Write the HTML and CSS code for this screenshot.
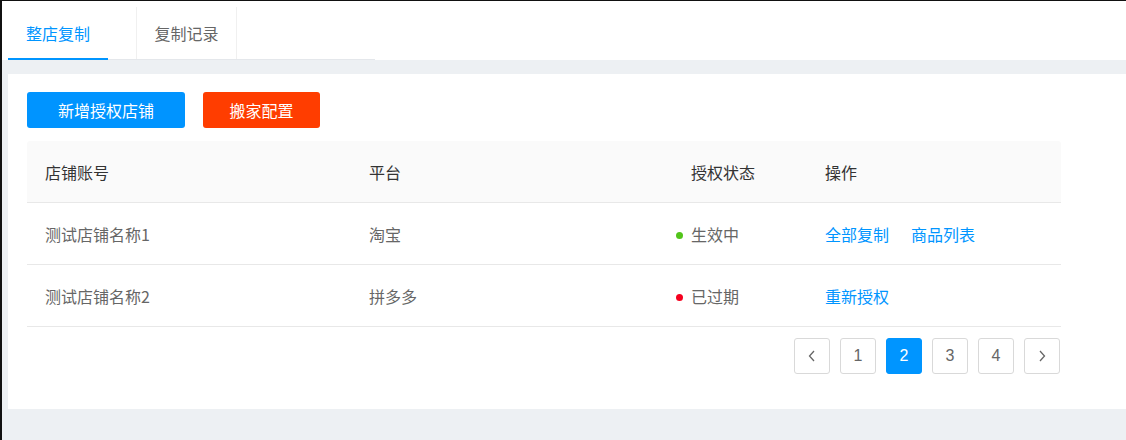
FILE: index.html
```html
<!DOCTYPE html>
<html lang="zh-CN">
<head>
<meta charset="utf-8">
<title>整店复制</title>
<link rel="stylesheet" href="styles.css">
</head>
<body>
<div class="header">
  <div class="tabs">
    <div class="tab active">整店复制</div>
    <div class="tab">复制记录</div>
  </div>
</div>
<div class="card">
  <div class="actions">
    <button class="btn btn-blue">新增授权店铺</button>
    <button class="btn btn-orange">搬家配置</button>
  </div>
  <div class="table">
    <div class="row head">
      <div class="cell">店铺账号</div>
      <div class="cell">平台</div>
      <div class="cell">授权状态</div>
      <div class="cell">操作</div>
    </div>
    <div class="row">
      <div class="cell">测试店铺名称1</div>
      <div class="cell">淘宝</div>
      <div class="cell"><span class="dot green"></span>生效中</div>
      <div class="cell ops"><a class="link">全部复制</a><a class="link">商品列表</a></div>
    </div>
    <div class="row">
      <div class="cell">测试店铺名称2</div>
      <div class="cell">拼多多</div>
      <div class="cell"><span class="dot red"></span>已过期</div>
      <div class="cell ops"><a class="link">重新授权</a></div>
    </div>
  </div>
  <div class="pager">
    <span class="page arrow"><svg width="10" height="14" viewBox="0 0 10 14"><path d="M7 2 L2.5 7 L7 12" fill="none" stroke="#666" stroke-width="1.3"/></svg></span>
    <span class="page">1</span>
    <span class="page current">2</span>
    <span class="page">3</span>
    <span class="page">4</span>
    <span class="page arrow"><svg width="10" height="14" viewBox="0 0 10 14"><path d="M3 2 L7.5 7 L3 12" fill="none" stroke="#666" stroke-width="1.3"/></svg></span>
  </div>
</div>
</body>
</html>
```
FILE: styles.css
```css
* { box-sizing: border-box; }
html, body { margin: 0; padding: 0; }
body {
  height: 440px;
  overflow: hidden;
  background: #edf0f3;
  border-top: 1px solid #111;
  border-left: 2px solid #111;
  font-family: "Noto Sans CJK SC", "Noto Sans", sans-serif;
  font-size: 16px;
  color: #666;
}
.header {
  background: #fff;
  height: 59px;
  padding-left: 6px;
}
.tabs {
  display: flex;
  align-items: flex-start;
  width: 367px;
  height: 59px;
  border-bottom: 1px solid #e4e7eb;
  gap: 28px;
}
.tab {
  width: 101px;
  height: 52px;
  margin-top: 6px;
  padding-top: 15px;
  line-height: 22px;
  text-align: center;
  color: #666;
  border-left: 1px solid #f0f0f0;
  border-right: 1px solid #f0f0f0;
}
.tab.active {
  width: 100px;
  height: 59px;
  margin-top: 0;
  padding-top: 21px;
  color: #0095ff;
  border: none;
  box-shadow: inset 0 -2px 0 #0095ff;
}
.card {
  background: #fff;
  margin: 14px 0 0 6px;
  padding: 18px 0 35px 19px;
}
.actions {
  display: flex;
  gap: 18px;
}
.btn {
  height: 36px;
  border: none;
  border-radius: 3px;
  color: #fff;
  font-family: inherit;
  font-size: 16px;
  padding: 0;
}
.btn-blue { width: 158px; background: #0094ff; }
.btn-orange { width: 117px; background: #ff3d00; }
.table {
  width: 1034px;
  margin-top: 13px;
}
.row {
  display: grid;
  grid-template-columns: 324px 322px 134px 1fr;
  height: 62px;
  border-bottom: 1px solid #e8e8e8;
  align-items: center;
}
.row.head {
  background: #fafafa;
  color: #333;
  border-radius: 3px 3px 0 0;
}
.cell {
  padding-left: 18px;
  line-height: 22px;
  white-space: nowrap;
}
.dot {
  display: inline-block;
  width: 7px;
  height: 7px;
  border-radius: 50%;
  margin-left: -15px;
  margin-right: 8px;
  vertical-align: middle;
  position: relative;
  top: -1px;
}
.dot.green { background: #52c41a; }
.dot.red { background: #f5001e; }
.ops {
  display: flex;
  gap: 22px;
}
.link { color: #0095ff; cursor: pointer; }
.pager {
  width: 1033px;
  display: flex;
  justify-content: flex-end;
  gap: 10px;
  margin-top: 11px;
}
.page {
  width: 36px;
  height: 36px;
  border: 1px solid #d9d9d9;
  border-radius: 3px;
  display: flex;
  align-items: center;
  justify-content: center;
  font-family: "Liberation Sans", Arial, sans-serif;
  font-size: 16px;
  color: #666;
}
.page.current {
  background: #0095ff;
  border-color: #0095ff;
  color: #fff;
}
```
